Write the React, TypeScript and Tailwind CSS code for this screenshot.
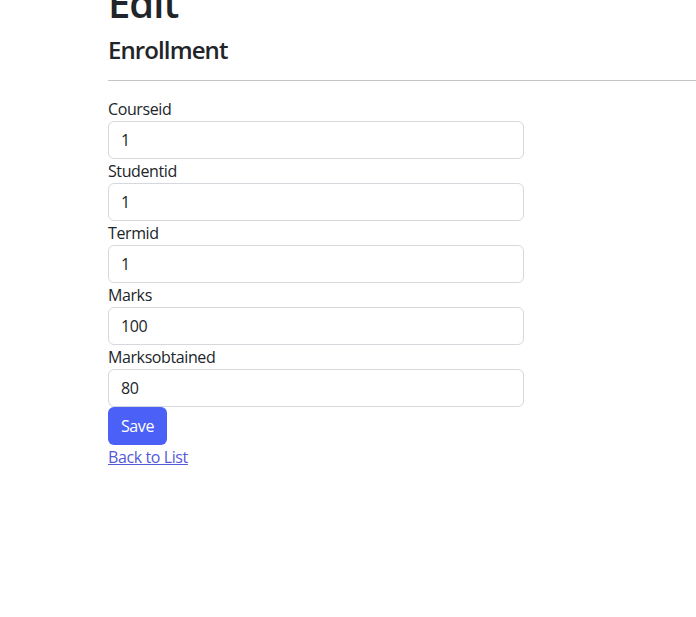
const fields = [
  { label: "Courseid", value: "1" },
  { label: "Studentid", value: "1" },
  { label: "Termid", value: "1" },
  { label: "Marks", value: "100" },
  { label: "Marksobtained", value: "80" },
];

export default function App() {
  return (
    <div
      className="min-h-[617px] bg-white text-[#212529] overflow-hidden"
      style={{ fontFamily: '"Open Sans", "Noto Sans", sans-serif' }}
    >
      <div className="pl-[108px] -mt-[21px]">
        <h1 className="text-[40px] leading-[48px] font-semibold tracking-[-1px] mb-2">Edit</h1>
        <h4 className="text-[24px] leading-[29px] font-semibold tracking-[-0.9px]">Enrollment</h4>
        <hr className="mt-4 mb-4 border-0 border-t border-[#c4c4c4]" />
        <form className="w-[416px] tracking-[-0.4px]">
          {fields.map((f) => (
            <div key={f.label}>
              <label className="block text-[16px] leading-6">{f.label}</label>
              <input
                defaultValue={f.value}
                className="block w-full h-[38px] px-3 text-[16px] border border-[#d5d8dc] rounded-md bg-white outline-none"
              />
            </div>
          ))}
          <button
            type="button"
            className="h-[38px] w-[59px] text-[16px] text-white bg-[#4b60f6] rounded-md"
          >
            Save
          </button>
        </form>
        <div className="leading-6 tracking-[-0.4px]">
          <a href="#" className="text-[16px] text-[#5558d8] underline">
            Back to List
          </a>
        </div>
      </div>
    </div>
  );
}
